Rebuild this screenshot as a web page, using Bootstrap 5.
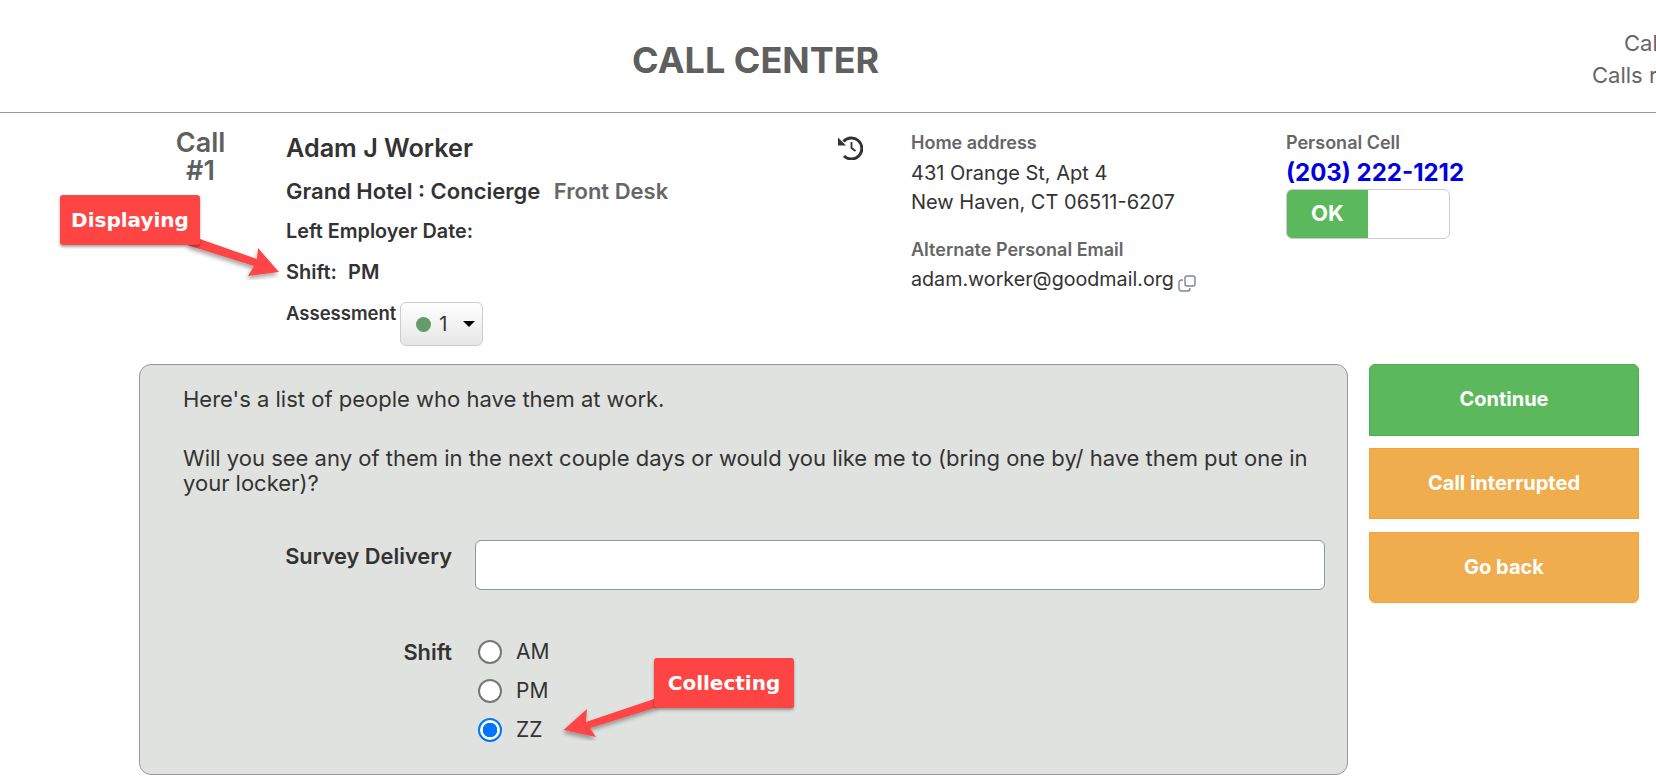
<!DOCTYPE html>
<html lang="en">
<head>
    <meta charset="UTF-8">
    <title>Call Center</title>
    <link href="https://cdn.jsdelivr.net/npm/bootstrap@5.3.0/dist/css/bootstrap.min.css" rel="stylesheet">
    <style>
        html, body { height: 779px; overflow: hidden; }
        body { font-family: Inter, "Liberation Sans", sans-serif; color: #333; background: #fff; position: relative; font-size: 22px; }
        .top-bar { height: 113px; border-bottom: 1px solid #999; padding-left: 632px; }
        .top-title { width: 248px; flex-shrink: 0; font-size: 36px; font-weight: 700; color: #5f5f5f; margin: 7px 0 0; line-height: 1; white-space: nowrap; }
        .top-stats { margin-left: 712px; width: 64px; flex-shrink: 0; align-self: flex-start; overflow: hidden; color: #666; font-size: 22px; line-height: 32px; padding-top: 27px; white-space: nowrap; }
        .top-stats div:first-child { padding-left: 32px; }
        .info-row { padding-top: 16px; height: 251px; }
        .call-no { width: 286px; padding-left: 150px; padding-right: 35px; text-align: center; color: #5f5f5f; font-size: 27px; font-weight: 600; line-height: 28px; flex-shrink: 0; }
        .who-col { width: 545px; flex-shrink: 0; padding-top: 4px; }
        .who-name { font-size: 25.200px; font-weight: 600; line-height: 30px; }
        .who-org { font-size: 22px; font-weight: 600; line-height: 28px; margin-top: 14px; }
        .who-org span { color: #666; margin-left: 8px; }
        .who-sm { font-size: 18.500px; font-weight: 600; line-height: 22px; }
        .who-left { font-size: 19.800px; margin-top: 15px; }
        .who-shift { font-size: 20px; margin-top: 19px; }
        .shift-val { margin-left: 6px; }
        .assess-row { margin-top: 19px; }
        .assess-btn { width: 83px; height: 44px; border: 1px solid #ccc; border-radius: 6px; background: linear-gradient(#fff, #e6e6e6); font-size: 20px; margin-left: 4px; padding: 0 0 0 15px; color: #333; }
        .assess-dot { width: 15px; height: 15px; border-radius: 50%; background: #629c66; }
        .assess-num { margin-left: 8px; }
        .assess-caret { margin-left: 15px; border-left: 6px solid transparent; border-right: 6px solid transparent; border-top: 6px solid #000; }
        .hist-col { width: 80px; flex-shrink: 0; padding: 0 0 0 6px; }
        .addr-col { width: 375px; flex-shrink: 0; padding-top: 2px; font-size: 20px; }
        .muted-head { font-size: 18px; font-weight: 600; color: #666; line-height: 24px; }
        .addr-col p { margin: 0; line-height: 29px; }
        .alt-head { margin-top: 21px; }
        .addr-col p.alt-mail { margin-top: 3px; font-size: 19.700px; }
        .cell-col { padding-top: 2px; }
        .cell-num { font-size: 24px; font-weight: 700; color: #0000e0; line-height: 32px; margin-top: 2px; }
        .ok-toggle { width: 164px; height: 50px; border: 1px solid #ccc; border-radius: 6px; overflow: hidden; }
        .ok-on { width: 81px; background: #5cb85c; color: #fff; font-weight: 700; font-size: 22px; padding-bottom: 2px; }
        .copy-icon { margin-top: 6px; }
        .work-row { padding-left: 139px; gap: 21px; }
        .script-panel { width: 1209px; height: 411px; flex-shrink: 0; background: #e0e2df; border: 1px solid #999; border-radius: 12px; padding: 22px 22px 0 43px; }
        .script-panel p { line-height: 25px; margin-bottom: 34px; }
        .script-panel p.last-line { margin-bottom: 44px; }
        .field-row { margin-left: -43px; }
        .field-row-a { margin-bottom: 49px; }
        .field-label { width: 335px; text-align: right; font-weight: 600; font-size: 21.800px; flex-shrink: 0; padding-right: 23px; }
        .field-input { height: 50px; width: 850px; flex-shrink: 0; border-color: #8a99a8; }
        .label-tight { line-height: 26px; }
        .choice-col { margin-left: 3px; font-size: 21px; line-height: 26px; }
        .choice-col .form-check { padding-left: 0; margin: 0 0 13px; min-height: 26px; display: flex; align-items: center; gap: 14px; }
        .choice-col .form-check-input { float: none; margin: 0; width: 24px; height: 24px; border: 2px solid #777; background-color: #fff; }
        .choice-col .form-check-input:checked[type=radio] { border-color: #0075ff; background: radial-gradient(circle, #0075ff 0 7px, #fff 7.500px); }
        .side-btns { width: 270px; gap: 12px; }
        .side-btn { border-radius: 0; color: #fff; font-size: 20px; font-weight: 700; height: 71px; padding-bottom: 8px; border: 1px solid #f0a43a; background: #f0ad4e; }
        .side-btn:hover { color: #fff; background: #f0ad4e; }
        .btn-go { height: 72px; background: #5cb85c; border-color: #4cae4c; border-radius: 6px 6px 0 0; }
        .btn-go:hover { background: #5cb85c; }
        .btn-last { margin-top: 1px; border-radius: 0 0 6px 6px; }
        .callout { position: absolute; background: #ff4444; color: #fff; font-family: "DejaVu Sans", sans-serif; font-weight: 700; font-size: 20px; border-radius: 3px; width: 140px; height: 50px; box-shadow: 0 2px 3px rgba(0,0,0,.35); }
        .callout-a { left: 60px; top: 195px; }
        .callout-b { left: 654px; top: 658px; }
        .callout-arrows { position: absolute; left: 0; top: 0; pointer-events: none; }
    </style>
</head>
<body>
    <div class="top-bar d-flex align-items-center">
        <h1 class="top-title">CALL CENTER</h1>
        <div class="top-stats">
            <div>Cal</div>
            <div>Calls r</div>
        </div>
    </div>

    <div class="info-row d-flex">
        <div class="call-no">Call<br>#1</div>
        <div class="who-col">
            <div class="who-name">Adam J Worker</div>
            <div class="who-org">Grand Hotel : Concierge <span>Front Desk</span></div>
            <div class="who-sm who-left">Left Employer Date:</div>
            <div class="who-sm who-shift">Shift: <span class="shift-val">PM</span></div>
            <div class="assess-row d-flex align-items-start">
                <span class="who-sm">Assessment</span>
                <button type="button" class="assess-btn d-flex align-items-center">
                    <span class="assess-dot"></span>
                    <span class="assess-num">1</span>
                    <span class="assess-caret"></span>
                </button>
            </div>
        </div>
        <div class="hist-col">
            <svg width="26" height="26" viewBox="12 9 26 26" fill="none" stroke="#333" stroke-width="3">
                <path d="M18.500 16.500A10.500 10.500 0 1 1 19 31"/>
                <path d="M13 12.500v8h8z" fill="#333" stroke="none"/>
                <path d="M26.500 17v6l4 3" stroke-width="1.800"/>
            </svg>
        </div>
        <div class="addr-col">
            <div class="muted-head">Home address</div>
            <p class="mt-1">431 Orange St, Apt 4</p>
            <p>New Haven, CT 06511-6207</p>
            <div class="muted-head alt-head">Alternate Personal Email</div>
            <p class="alt-mail d-flex align-items-center gap-1">adam.worker@goodmail.org
                <svg class="copy-icon" width="18" height="18" viewBox="0 0 18 18" fill="none" stroke="#7b8794" stroke-width="1.400">
                    <rect x="7" y="2" width="10" height="10" rx="2"/>
                    <path d="M5 6H3.500A2.500 2.500 0 0 0 1 8.500v6A2.500 2.500 0 0 0 3.500 17h6a2.500 2.500 0 0 0 2.500-2.500V14"/>
                </svg>
            </p>
        </div>
        <div class="cell-col">
            <div class="muted-head">Personal Cell</div>
            <div class="cell-num">(203) 222-1212</div>
            <div class="ok-toggle d-flex">
                <div class="ok-on d-flex align-items-center justify-content-center">OK</div>
            </div>
        </div>
    </div>

    <div class="work-row d-flex align-items-start">
        <div class="script-panel">
            <p>Here's a list of people who have them at work.</p>
            <p class="last-line">Will you see any of them in the next couple days or would you like me to (bring one by/ have them put one in your locker)?</p>
            <div class="field-row field-row-a d-flex">
                <label class="field-label" for="surveyDelivery">Survey Delivery</label>
                <input type="text" id="surveyDelivery" class="form-control field-input">
            </div>
            <div class="field-row d-flex">
                <div class="field-label label-tight">Shift</div>
                <div class="choice-col">
                    <div class="form-check"><input class="form-check-input" type="radio" name="shift" id="shiftAm"><label for="shiftAm">AM</label></div>
                    <div class="form-check"><input class="form-check-input" type="radio" name="shift" id="shiftPm"><label for="shiftPm">PM</label></div>
                    <div class="form-check"><input class="form-check-input" type="radio" name="shift" id="shiftZz" checked><label for="shiftZz">ZZ</label></div>
                </div>
            </div>
        </div>
        <div class="side-btns d-flex flex-column">
            <button type="button" class="btn side-btn btn-go">Continue</button>
            <button type="button" class="btn side-btn">Call interrupted</button>
            <button type="button" class="btn side-btn btn-last">Go back</button>
        </div>
    </div>

    <!-- annotations sit over the page -->
    <svg class="callout-arrows" width="1656" height="779">
        <defs><filter id="arrowShadow"><feDropShadow dx="-1" dy="3" stdDeviation="2" flood-color="#000" flood-opacity=".35"/></filter></defs>
        <polygon points="200,239 257,259 258,248 279,272 248,276 254,266 187,245" fill="#ff4444" filter="url(#arrowShadow)"/>
        <polygon points="654,699 586,722 587,709 563.500,730 596,737 590,728 658,707" fill="#ff4444" filter="url(#arrowShadow)"/>
    </svg>
    <div class="callout callout-a d-flex align-items-center justify-content-center">Displaying</div>
    <div class="callout callout-b d-flex align-items-center justify-content-center">Collecting</div>

    <script src="https://cdn.jsdelivr.net/npm/bootstrap@5.3.0/dist/js/bootstrap.bundle.min.js"></script>
</body>
</html>
